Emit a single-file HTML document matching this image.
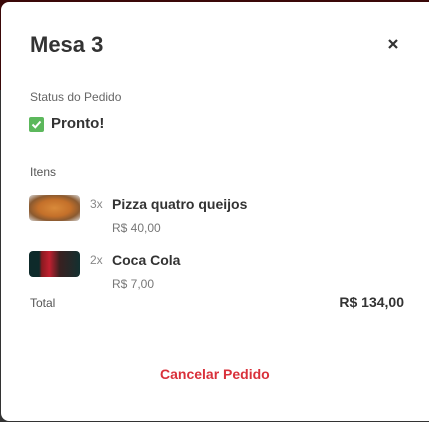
<!DOCTYPE html>
<html><head><meta charset="utf-8"><style>
*{margin:0;padding:0;box-sizing:border-box}
body{width:429px;height:422px;overflow:hidden;background:#333;font-family:"Liberation Sans",sans-serif;position:relative}
.topbg{position:absolute;left:0;top:0;width:429px;height:90px;background:#3a0808}
.modal{position:absolute;left:1px;top:2px;width:440px;height:419px;background:#fff;border-radius:8px}
.a{position:absolute;white-space:nowrap}
</style></head><body>
<div class="topbg"></div>
<div class="modal"></div>
<div class="a" style="left:30px;top:32px;font-size:22px;font-weight:bold;color:#333">Mesa 3</div>
<svg class="a" style="left:388px;top:39px" width="10" height="10" viewBox="0 0 10 10"><path d="M1 1L9 9M9 1L1 9" stroke="#333" stroke-width="2.2"/></svg>
<div class="a" style="left:30px;top:90px;font-size:12px;color:#666">Status do Pedido</div>
<div class="a" style="left:29px;top:117px;width:15px;height:15px;background:#5cb85c;border-radius:2px"></div>
<svg class="a" style="left:29px;top:117px" width="15" height="15" viewBox="0 0 15 15"><path d="M3.5 7.5L6.3 10.3L11.5 4.5" stroke="#fff" stroke-width="2" fill="none"/></svg>
<div class="a" style="left:51px;top:115px;font-size:15px;font-weight:bold;color:#333">Pronto!</div>
<div class="a" style="left:30px;top:165px;font-size:12px;color:#555">Itens</div>
<div class="a" style="left:29px;top:195px;width:51px;height:26px;border-radius:4px;background:radial-gradient(ellipse at 50% 50%,#d98a3a 0,#c4702a 45%,#8b5a30 70%,#ddd 100%)"></div>
<div class="a" style="left:90px;top:197px;font-size:12px;color:#888">3x</div>
<div class="a" style="left:112px;top:196px;font-size:14px;font-weight:bold;color:#333">Pizza quatro queijos</div>
<div class="a" style="left:112px;top:221px;font-size:12px;color:#777">R$ 40,00</div>
<div class="a" style="left:29px;top:251px;width:51px;height:26px;border-radius:4px;background:linear-gradient(90deg,#0e2a2a 0,#0e2a2a 20%,#8a1a20 25%,#c02030 40%,#3a2020 60%,#123030 100%)"></div>
<div class="a" style="left:90px;top:253px;font-size:12px;color:#888">2x</div>
<div class="a" style="left:112px;top:252px;font-size:14px;font-weight:bold;color:#333">Coca Cola</div>
<div class="a" style="left:112px;top:277px;font-size:12px;color:#777">R$ 7,00</div>
<div class="a" style="left:30px;top:296px;font-size:12px;color:#555">Total</div>
<div class="a" style="right:25px;top:294px;font-size:14px;font-weight:bold;color:#333">R$ 134,00</div>
<div class="a" style="left:160px;top:366px;font-size:14px;font-weight:bold;color:#d9303a">Cancelar Pedido</div>
</body></html>
